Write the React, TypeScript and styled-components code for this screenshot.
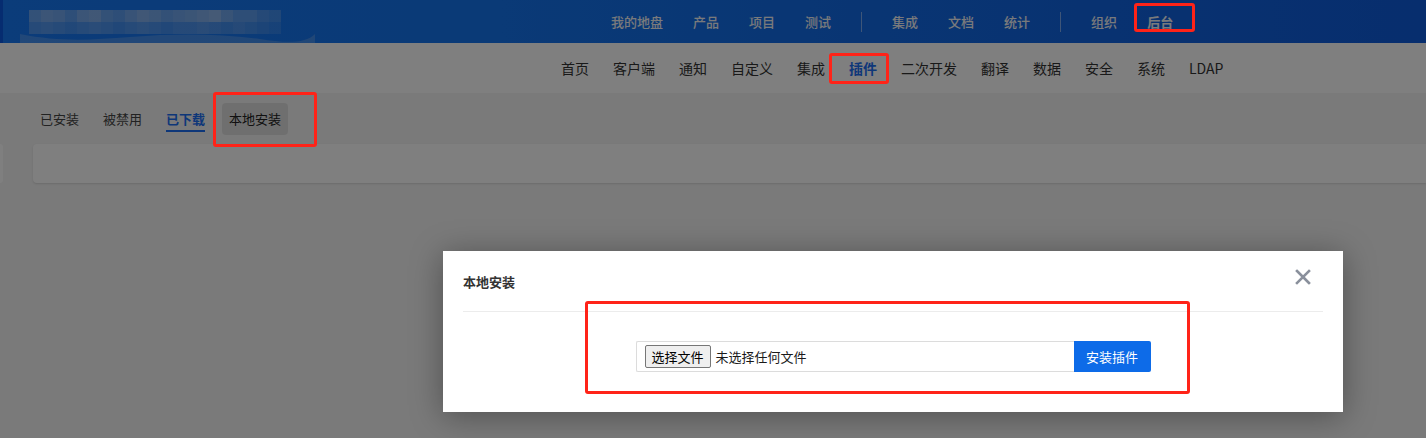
import styled, { createGlobalStyle, css } from "styled-components";

const GlobalStyle = createGlobalStyle`
  html, body {
    margin: 0;
    padding: 0;
  }
  body {
    font-family: "Noto Sans CJK SC", "Noto Sans", sans-serif;
    overflow: hidden;
  }
`;

const topNav = ["我的地盘", "产品", "项目", "测试", "|", "集成", "文档", "统计", "|", "组织", "后台"];
const subNav = ["首页", "客户端", "通知", "自定义", "集成", "插件", "二次开发", "翻译", "数据", "安全", "系统", "LDAP"];
const tabs = ["已安装", "被禁用", "已下载", "本地安装"];

// blurred logo mosaic, opacity per cell
const mosaicTop = [0.45, 0.55, 0.5, 0.4, 0.55, 0.6, 0.45, 0.4, 0.5, 0.6, 0.55, 0.45, 0.5, 0.55, 0.6, 0.65, 0.5, 0.4, 0.4, 0.3, 0.25];
const mosaicBottom = [0.3, 0.35, 0.3, 0.25, 0.3, 0.35, 0.3, 0.25, 0.3, 0.35, 0.3, 0.25, 0.3, 0.3, 0.35, 0.3, 0.25, 0.3, 0.25, 0.2, 0.15];

function App() {
  return (
    <Page>
      <GlobalStyle />
      <Header>
        <Logo width="295" height="43" viewBox="0 0 295 43">
          {mosaicTop.map((o, i) => (
            <rect key={"t" + i} x={9 + i * 12} y={10} width={12} height={12} fill="#c9d6ea" opacity={o} />
          ))}
          {mosaicBottom.map((o, i) => (
            <rect key={"b" + i} x={9 + i * 12} y={22} width={12} height={12} fill="#c9d6ea" opacity={o} />
          ))}
          <path
            d="M0 34 C40 42 70 40 110 37 C160 33 200 34 240 39 C265 43 285 44 295 34 L295 43 L0 43 Z"
            fill="#c9d6ea"
            opacity={0.25}
          />
        </Logo>
        <TopNav>
          {topNav.map((t, i) =>
            t === "|" ? (
              <NavDivider key={i} />
            ) : (
              <TopItem key={i} $active={t === "后台"}>
                {t}
              </TopItem>
            )
          )}
        </TopNav>
      </Header>
      <SubNav>
        {subNav.map((t) => (
          <SubItem key={t} $active={t === "插件"}>
            {t}
          </SubItem>
        ))}
      </SubNav>
      <Tabs>
        {tabs.map((t) => (
          <Tab key={t} $active={t === "已下载"} $selected={t === "本地安装"}>
            <span>{t}</span>
          </Tab>
        ))}
      </Tabs>
      <CardRow>
        <Sliver />
        <Card />
      </CardRow>

      <Overlay />

      <Modal>
        <ModalHeader>
          <ModalTitle>本地安装</ModalTitle>
          <Close>
            <svg width="16" height="16" viewBox="0 0 16 16">
              <path d="M2 2 L14 14 M14 2 L2 14" stroke="#8a909c" strokeWidth="2.6" strokeLinecap="square" />
            </svg>
          </Close>
        </ModalHeader>
        <ModalBody>
          <InputGroup>
            <FileBox>
              <FileButton>选择文件</FileButton>
              <FileText>未选择任何文件</FileText>
            </FileBox>
            <InstallButton>安装插件</InstallButton>
          </InputGroup>
        </ModalBody>
      </Modal>

      <Mark $x={1134} $y={3} $w={61} $h={29} />
      <Mark $x={829} $y={53} $w={60} $h={31} />
      <Mark $x={213} $y={92} $w={104} $h={55} />
      <Mark $x={585} $y={301} $w={605} $h={93} />
    </Page>
  );
}

const Page = styled.div`
  position: relative;
  width: 1426px;
  height: 438px;
  overflow: hidden;
  background: #f4f4f4;
`;

const Header = styled.div`
  height: 43px;
  display: flex;
  align-items: center;
  border-left: 3px solid #0c58e0;
  background: linear-gradient(90deg, #1778f4 0%, #1474ee 35%, #0f5cdc 100%);
`;

const Logo = styled.svg`
  display: block;
  margin-left: 17px;
  flex-shrink: 0;
  align-self: flex-start;
`;

const TopNav = styled.nav`
  display: flex;
  align-items: center;
  gap: 30px;
  margin-left: 296px;
`;

const TopItem = styled.span<{ $active?: boolean }>`
  font-size: 13px;
  line-height: 20px;
  color: #f2f4f8;
  font-weight: ${(p) => (p.$active ? 700 : 500)};
  white-space: nowrap;
`;

const NavDivider = styled.span`
  width: 1px;
  height: 20px;
  background: rgba(255, 255, 255, 0.45);
`;

const SubNav = styled.div`
  height: 50px;
  display: flex;
  align-items: center;
  gap: 24px;
  padding-left: 561px;
  background: #fff;
`;

const SubItem = styled.span<{ $active?: boolean }>`
  font-size: 14px;
  line-height: 20px;
  white-space: nowrap;
  color: ${(p) => (p.$active ? "#1c6ef2" : "#333")};
  font-weight: ${(p) => (p.$active ? 700 : 400)};
`;

const Tabs = styled.div`
  display: flex;
  gap: 10px;
  padding: 10px 0 0 33px;
`;

const Tab = styled.div<{ $active?: boolean; $selected?: boolean }>`
  position: relative;
  height: 32px;
  line-height: 32px;
  padding: 0 7px;
  border-radius: 4px;
  font-size: 13px;
  white-space: nowrap;
  color: #444;
  ${(p) =>
    p.$selected &&
    css`
      background: #dfdfdf;
      color: #222;
    `}
  ${(p) =>
    p.$active &&
    css`
      color: #1c6ef2;
      font-weight: 700;
      &::after {
        content: "";
        position: absolute;
        left: 7px;
        right: 7px;
        bottom: 3px;
        height: 2px;
        background: #1c6ef2;
      }
    `}
`;

const CardRow = styled.div`
  display: flex;
  margin-top: 9px;
  height: 39px;
`;

const Sliver = styled.div`
  width: 3px;
  background: #fff;
  border-radius: 0 3px 3px 0;
`;

const Card = styled.div`
  flex: 1;
  margin-left: 30px;
  background: #fff;
  border-radius: 4px 0 0 4px;
  box-shadow: 0 1px 2px rgba(0, 0, 0, 0.12);
`;

const Overlay = styled.div`
  position: absolute;
  inset: 0;
  background: rgba(0, 0, 0, 0.5);
`;

const Modal = styled.div`
  position: absolute;
  left: 443px;
  top: 251px;
  width: 900px;
  background: #fff;
  box-shadow: 0 4px 30px rgba(0, 0, 0, 0.35);
`;

const ModalHeader = styled.div`
  margin: 0 20px;
  height: 60px;
  display: flex;
  align-items: center;
  justify-content: space-between;
  border-bottom: 1px solid #ececec;
`;

const ModalTitle = styled.div`
  font-size: 13px;
  font-weight: 700;
  color: #333;
`;

const Close = styled.div`
  align-self: flex-start;
  margin-top: 18px;
  margin-right: 12px;
  width: 16px;
  height: 16px;
  svg {
    display: block;
  }
`;

const ModalBody = styled.div`
  display: flex;
  justify-content: center;
  padding: 29px 0 40px;
`;

const InputGroup = styled.div`
  display: flex;
  height: 31px;
`;

const FileBox = styled.div`
  box-sizing: border-box;
  width: 438px;
  height: 31px;
  display: flex;
  align-items: center;
  padding-left: 8px;
  border: 1px solid #dcdcdc;
  border-right: none;
  border-radius: 2px 0 0 2px;
`;

const FileButton = styled.div`
  box-sizing: border-box;
  height: 23px;
  line-height: 21px;
  padding: 0 6px;
  border: 1px solid #767676;
  border-radius: 2px;
  background: #efefef;
  font-size: 13px;
  color: #000;
  white-space: nowrap;
`;

const FileText = styled.span`
  margin-left: 5px;
  font-size: 13px;
  color: #1a1a1a;
`;

const InstallButton = styled.div`
  width: 77px;
  height: 31px;
  line-height: 31px;
  text-align: center;
  background: #0d6be8;
  color: #fff;
  font-size: 13px;
  border-radius: 0 2px 2px 0;
`;

const Mark = styled.div<{ $x: number; $y: number; $w: number; $h: number }>`
  position: absolute;
  left: ${(p) => p.$x}px;
  top: ${(p) => p.$y}px;
  width: ${(p) => p.$w}px;
  height: ${(p) => p.$h}px;
  box-sizing: border-box;
  border: 3px solid #ff2318;
  border-radius: 3px;
`;

export default App;
